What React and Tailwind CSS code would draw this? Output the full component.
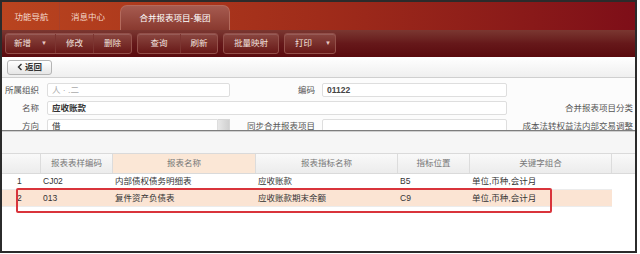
import React from 'react';

const font = "font-['Liberation_Sans','Noto_Sans_CJK_SC',sans-serif]";

function Seg({ children, arrow, first }) {
  return (
    <div className={`flex items-center justify-center ${first ? '' : 'border-l border-[#7c3531]'} px-[8px] text-[8.5px] text-[#f2e2df]`}>
      {children}
      {arrow && <span className="ml-[10px] text-[6px] text-[#e9c9c4]">▼</span>}
    </div>
  );
}

function Group({ children }) {
  return (
    <div className="flex h-[21px] items-stretch rounded-[3px] border border-[#93504a] bg-linear-to-b from-[#8a4640] to-[#681818] shadow-[inset_0_1px_0_rgba(255,255,255,0.12)]">
      {children}
    </div>
  );
}

function Input({ className = '', children }) {
  return (
    <div className={`flex h-[14px] items-center rounded-[2px] border border-[#dedede] bg-white pl-[4px] text-[8.5px] text-[#333] ${className}`}>
      {children}
    </div>
  );
}

const cols = [
  { w: 'w-[39px]', h: '' },
  { w: 'w-[72px]', h: '报表表样编码' },
  { w: 'w-[143px]', h: '报表名称', hl: true },
  { w: 'w-[142px]', h: '报表指标名称' },
  { w: 'w-[72px]', h: '指标位置' },
  { w: 'w-[142px]', h: '关键字组合' },
];

const rows = [
  ['1', 'CJ02', '内部债权债务明细表', '应收账款', 'B5', '单位,币种,会计月'],
  ['2', '013', '复件资产负债表', '应收账款期末余额', 'C9', '单位,币种,会计月'],
];

export default function App() {
  return (
    <div className={`h-[254px] w-[640px] bg-white ${font}`}>
      <div className="relative flex h-[253px] w-[637px] flex-col overflow-hidden border-2 border-[#2b2b2b] bg-white">
        {/* tabs */}
        <div className="flex h-[28px] shrink-0 items-end bg-linear-to-r from-[#b9441f] via-[#a02c1a] to-[#7e0e18] pl-[2px]">
          <div className="flex h-full w-[56px] items-center justify-center border-r border-[#a8402a] pt-[2px] text-[8.5px] text-[#f4d9cc]">功能导航</div>
          <div className="flex h-full w-[56px] items-center justify-center pt-[2px] text-[8.5px] text-[#f4d9cc]">消息中心</div>
          <div className="ml-[4px] flex h-[25px] w-[110px] items-center justify-center rounded-t-[7px] border border-b-0 border-[#b46a5c] bg-linear-to-b from-[#a65b50] to-[#89392f] text-[8.5px] text-white">合并报表项目-集团</div>
        </div>

        {/* toolbar */}
        <div className="flex h-[27px] shrink-0 items-center gap-[5px] bg-linear-to-b from-[#7a3731] via-[#66181a] to-[#5a0a0e] pl-[3px]">
          <Group>
            <Seg first arrow>新增</Seg>
            <div className="flex w-[38px] items-center justify-center border-l border-[#7c3531] text-[8.5px] text-[#f2e2df]">修改</div>
            <div className="flex w-[38px] items-center justify-center border-l border-[#7c3531] text-[8.5px] text-[#f2e2df]">删除</div>
          </Group>
          <Group>
            <div className="flex w-[42px] items-center justify-center text-[8.5px] text-[#f2e2df]">查询</div>
            <div className="flex w-[37px] items-center justify-center border-l border-[#7c3531] text-[8.5px] text-[#f2e2df]">刷新</div>
          </Group>
          <Group>
            <div className="flex w-[54px] items-center justify-center text-[8.5px] text-[#f2e2df]">批量映射</div>
          </Group>
          <Group>
            <div className="flex w-[50px] items-center pl-[10px] text-[8.5px] text-[#f2e2df]">
              打印<span className="ml-[13px] text-[6px] text-[#e9c9c4]">▼</span>
            </div>
          </Group>
        </div>

        {/* back bar */}
        <div className="flex h-[21px] shrink-0 items-center border-b border-[#cfcfcf] bg-linear-to-b from-white to-[#efefef] pl-[5px]">
          <div className="flex h-[15px] w-[45px] items-center justify-center gap-[2px] rounded-[3px] border border-[#b4b4b4] bg-linear-to-b from-white to-[#e6e6e6] text-[8.5px] font-bold text-[#333]">
            <svg width="6" height="8" viewBox="0 0 6 8"><path d="M4.5 1 L1.5 4 L4.5 7" fill="none" stroke="#333" strokeWidth="1.4" /></svg>
            返回
          </div>
        </div>

        {/* form */}
        <div className="flex h-[53px] shrink-0 flex-col gap-[4px] overflow-hidden border-b border-[#7d7d7d] bg-[#fcfcfc] pt-[5px] text-[8.5px] text-[#555]">
          <div className="flex items-center">
            <div className="w-[37px] text-right">所属组织</div>
            <Input className="ml-[8px] w-[183px] text-[#aaa]">人 · .二</Input>
            <div className="w-[85px] text-right">编码</div>
            <Input className="ml-[7px] w-[185px] font-bold text-[#444]">01122</Input>
          </div>
          <div className="flex items-center">
            <div className="w-[37px] text-right">名称</div>
            <Input className="ml-[8px] w-[460px] font-bold text-[#333]">应收账款</Input>
            <div className="w-[126px] text-right">合并报表项目分类</div>
          </div>
          <div className="flex items-center">
            <div className="w-[37px] text-right">方向</div>
            <div className="ml-[8px] flex w-[183px]">
              <Input className="w-[171px] rounded-r-none">借</Input>
              <div className="h-[14px] w-[12px] border border-l-0 border-[#d6d6d6] bg-linear-to-r from-[#e8e8e8] to-[#d0d0d0]" />
            </div>
            <div className="w-[85px] text-right">同步合并报表项目</div>
            <Input className="ml-[7px] w-[185px]" />
            <div className="w-[126px] text-right">成本法转权益法内部交易调整</div>
          </div>
        </div>

        {/* gap band */}
        <div className="h-[22px] shrink-0 border-t border-[#cfcfcf] bg-[#f6f6f6]" />

        {/* table */}
        <div className="flex-1 bg-white text-[8.5px]">
          <div className="flex h-[21px] border-y border-[#dadada] bg-linear-to-b from-[#f9f9f9] to-[#ececec] text-[#777]">
            {cols.map((c, i) => (
              <div key={i} className={`${c.w} flex items-center justify-center border-r border-[#dcdcdc] ${c.hl ? 'bg-[#fbe7d6]' : ''}`}>{c.h}</div>
            ))}
          </div>
          {rows.map((r, ri) => (
            <div key={ri} className={`flex w-[610px] items-center border-b border-[#ececec] text-[#333] ${ri === 1 ? 'h-[17px] bg-[#fbe4d3]' : 'h-[16px]'}`}>
              {r.map((v, i) => (
                <div key={i} className={`${cols[i].w} ${i === 0 ? 'pl-[15px]' : 'pl-[2px]'} truncate`}>{v}</div>
              ))}
            </div>
          ))}
        </div>

        {/* highlight box */}
        <div className="absolute left-[14px] top-[186px] h-[25px] w-[536px] rounded-[2px] border-2 border-[#d9343b]" />
      </div>
    </div>
  );
}
